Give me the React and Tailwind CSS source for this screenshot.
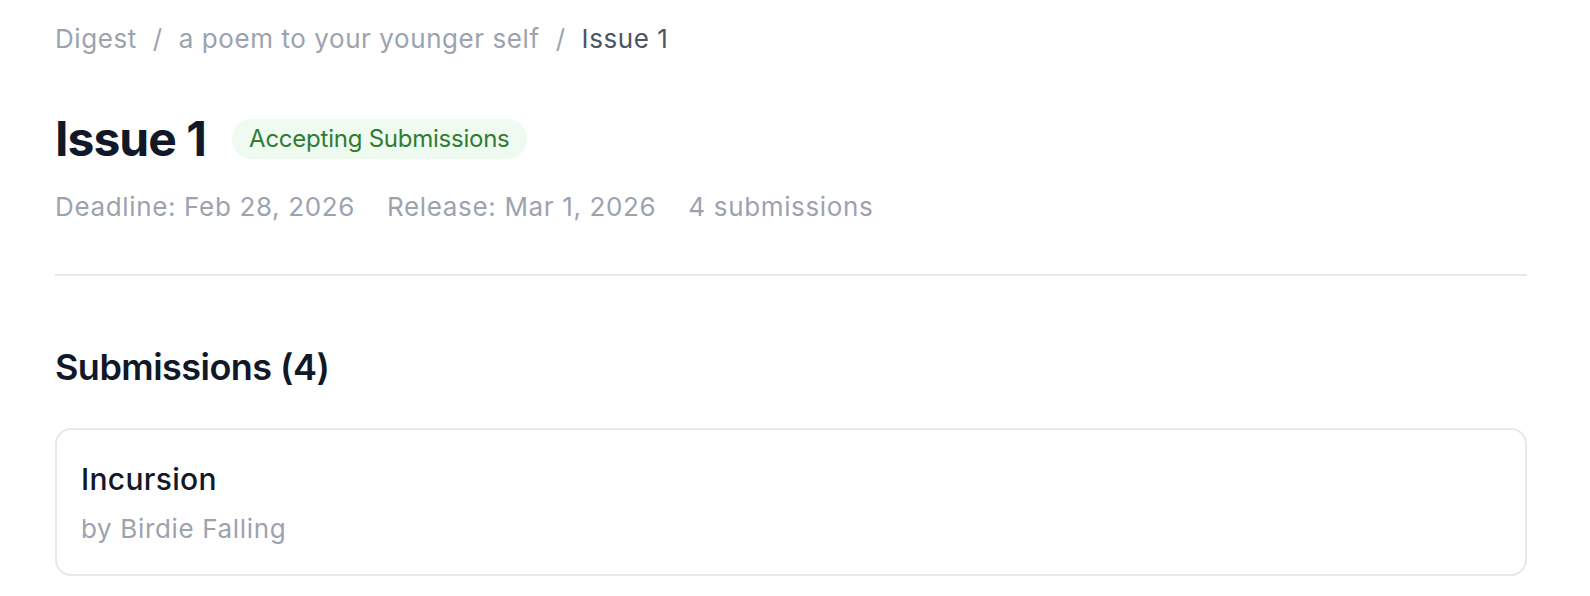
const meta = ['Deadline: Feb 28, 2026', 'Release: Mar 1, 2026', '4 submissions']

const submissions = [{ title: 'Incursion', author: 'Birdie Falling' }]

function Slash() {
  return <span className="mx-[16px]">/</span>
}

export default function App() {
  return (
    <div className="min-h-screen bg-white font-['Inter','Noto_Sans',sans-serif] antialiased">
      <div className="pl-[55px] pr-[63px] pt-[19px]">
        <nav className="flex items-center text-[26px] leading-[1.5] tracking-[0.022em] text-[#9ca3af]">
          <span>Digest</span>
          <Slash />
          <span>a poem to your younger self</span>
          <Slash />
          <span className="text-[#4b5563]">Issue 1</span>
        </nav>

        <div className="mt-[57px] flex items-center gap-[26px]">
          <h1 className="text-[48px] font-bold leading-none tracking-[-0.02em] text-[#111827]">Issue 1</h1>
          <span className="flex h-[40px] items-center rounded-full bg-[#effaf1] px-[17px] text-[24px] tracking-[-0.01em] text-[#2e7d32]">
            Accepting Submissions
          </span>
        </div>

        <div className="mt-[24px] flex gap-[32px] text-[26px] leading-[1.5] tracking-[0.025em] text-[#9ca3af]">
          {meta.map((m) => (
            <span key={m}>{m}</span>
          ))}
        </div>

        <div className="mt-[48px] h-[2px] bg-[#e5e7eb]" />

        <h2 className="mt-[64px] text-[36px] font-semibold leading-[1.5] tracking-[-0.015em] text-[#111827]">
          Submissions ({submissions.length * 4})
        </h2>

        <div className="mt-[34px] flex flex-col gap-4">
          {submissions.map((s) => (
            <div key={s.title} className="rounded-[16px] border-2 border-[#e5e7eb] px-[24px] pb-[26px] pt-[27px]">
              <div className="text-[30px] font-medium leading-[1.5] tracking-[0.01em] text-[#111827]">{s.title}</div>
              <div className="mt-[7px] text-[26px] leading-[1.5] tracking-[0.025em] text-[#9ca3af]">by {s.author}</div>
            </div>
          ))}
        </div>
      </div>
    </div>
  )
}
